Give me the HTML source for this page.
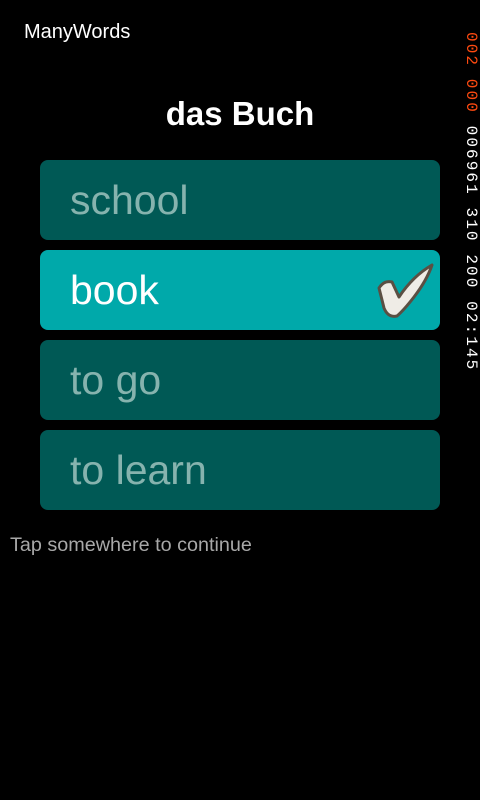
<!DOCTYPE html>
<html><head><style>
body{margin:0;width:480px;height:800px;background:#000;position:relative;overflow:hidden;font-family:"Liberation Sans",sans-serif}
.t{position:absolute;left:24px;top:21px;color:#fff;font-size:20px}
h1{position:absolute;top:95px;left:0;width:480px;text-align:center;margin:0;color:#fff;font-size:33px;font-weight:bold}
.b{position:absolute;left:40px;width:400px;height:80px;border-radius:8px;background:#005955;color:#86b3ae;font-size:41px;box-sizing:border-box;padding-left:30px;line-height:80px}
.s{background:#00a9aa;color:#fff}
.f{position:absolute;left:10px;top:534px;color:#a8a8a8;font-size:19.8px}
.v{position:absolute;left:466px;top:32px;transform-origin:0 0;transform:rotate(90deg) translateY(-14px);font-family:"Liberation Mono",monospace;font-size:16px;color:#fff;white-space:nowrap;letter-spacing:2.1px}
.v span{color:#ff4a10}
</style></head><body>
<div class="t">ManyWords</div>
<h1>das Buch</h1>
<div class="b" style="top:160px">school</div>
<div class="b s" style="top:250px">book
<svg style="position:absolute;left:335px;top:10px" width="62" height="62" viewBox="375 260 62 62"><path d="M379 288 Q384 280 392 282 L399 297 Q413 276 432 265 Q427 280 414 297 Q404 310 397 316 Q388 318 384 308 Z" fill="#efece6" stroke="#5b4f43" stroke-width="3" stroke-linejoin="round"/></svg></div>
<div class="b" style="top:340px">to go</div>
<div class="b" style="top:430px">to learn</div>
<div class="f">Tap somewhere to continue</div>
<div class="v"><span>002 000</span> 006961 310 200 02:145</div>
</body></html>
